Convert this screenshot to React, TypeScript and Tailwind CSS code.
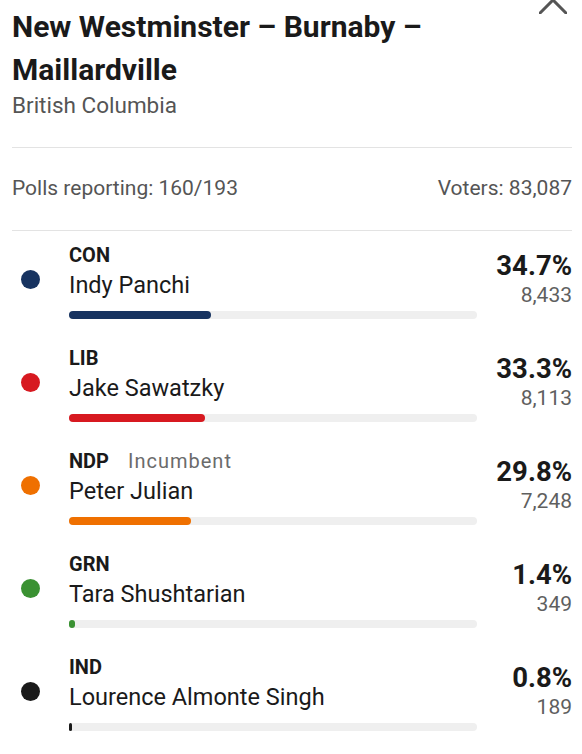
import React from "react";

type Candidate = {
  party: string;
  name: string;
  pct: number;
  votes: string;
  color: string;
  incumbent?: boolean;
};

const candidates: Candidate[] = [
  { party: "CON", name: "Indy Panchi", pct: 34.7, votes: "8,433", color: "#173360" },
  { party: "LIB", name: "Jake Sawatzky", pct: 33.3, votes: "8,113", color: "#d71920" },
  { party: "NDP", name: "Peter Julian", pct: 29.8, votes: "7,248", color: "#ef7000", incumbent: true },
  { party: "GRN", name: "Tara Shushtarian", pct: 1.4, votes: "349", color: "#3a9132" },
  { party: "IND", name: "Lourence Almonte Singh", pct: 0.8, votes: "189", color: "#1a1a1a" },
];

function CandidateRow({ c }: { c: Candidate }) {
  return (
    <div className="flex h-[103px] items-start pt-[11px]">
      <div className="flex w-[57px] shrink-0 items-center pl-[9px] pt-[28px]">
        <span className="block h-[19px] w-[19px] rounded-full" style={{ backgroundColor: c.color }} />
      </div>
      <div className="w-[408px] shrink-0">
        <div className="flex items-baseline gap-[19px] text-[20px] leading-[26px]">
          <span className="font-bold text-[#1a1a1a]">{c.party}</span>
          {c.incumbent && <span className="tracking-[1px] text-[#6b6b6b]">Incumbent</span>}
        </div>
        <div className="text-[23.5px] leading-[34px] text-[#1a1a1a]">{c.name}</div>
        <div className="mt-[9px] h-[8px] w-full rounded-full bg-[#efefef]">
          <div className="h-full rounded-full" style={{ width: `${c.pct}%`, backgroundColor: c.color }} />
        </div>
      </div>
      <div className="flex flex-1 flex-col items-end pt-[9px]">
        <span className="text-[27.5px] font-bold leading-[30px] text-[#1a1a1a]">{c.pct.toFixed(1)}%</span>
        <span className="text-[21px] leading-[28px] text-[#5f5f5f]">{c.votes}</span>
      </div>
    </div>
  );
}

export default function App() {
  return (
    <div
      className="relative h-[754px] w-[582px] overflow-hidden bg-white pl-[12px] pr-[10px]"
      style={{ fontFamily: "Roboto, 'Noto Sans', sans-serif" }}
    >
      <button className="absolute right-[15px] top-[-14px] h-[28px] w-[28px]" aria-label="Close">
        <svg viewBox="0 0 28 28" className="h-full w-full" fill="none" stroke="#555" strokeWidth="3" strokeLinecap="round">
          <path d="M1 1 L27 27 M27 1 L1 27" />
        </svg>
      </button>

      <div className="pt-[5px]">
        <h1 className="text-[30px] font-bold leading-[43px] text-[#1a1a1a]">
          New Westminster – Burnaby –<br />Maillardville
        </h1>
        <div className="text-[22.5px] leading-[28px] text-[#555]">British Columbia</div>
      </div>

      <div className="mt-[28px] border-t border-[#e3e3e3]" />
      <div className="flex h-[82px] items-center justify-between text-[21px] text-[#555]">
        <span>Polls reporting: 160/193</span>
        <span>Voters: 83,087</span>
      </div>
      <div className="border-t border-[#e3e3e3]" />

      {candidates.map((c) => (
        <CandidateRow key={c.party} c={c} />
      ))}
    </div>
  );
}
